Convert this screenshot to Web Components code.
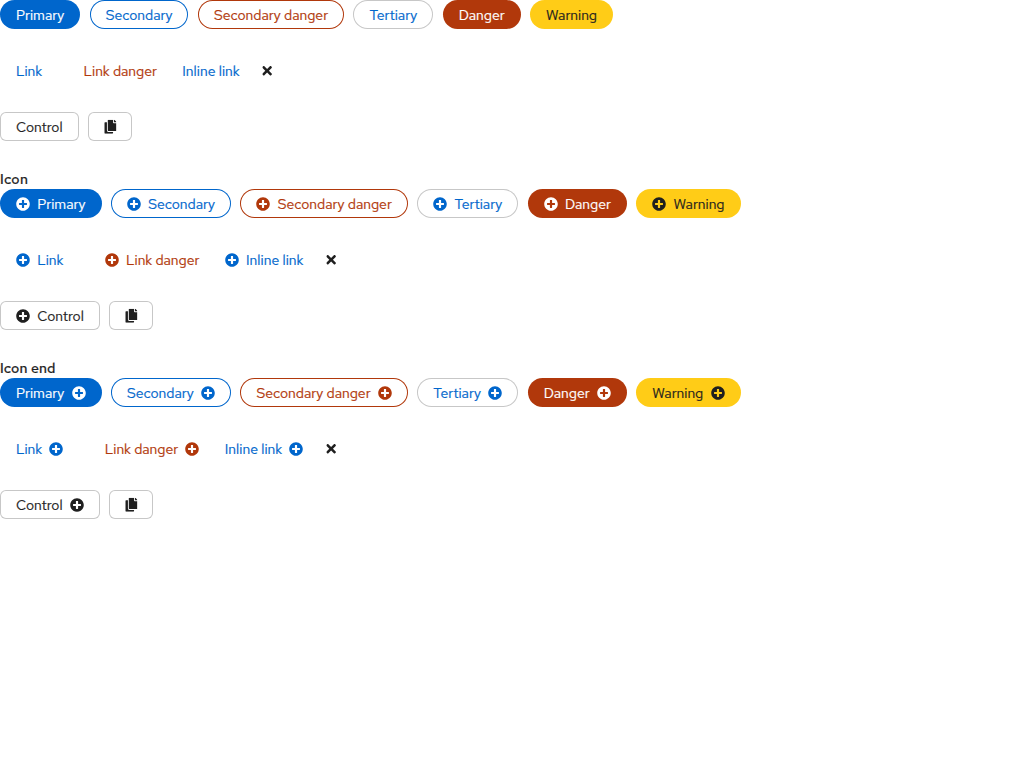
<!DOCTYPE html>
<html lang="en">
<head>
<meta charset="utf-8">
<title>Buttons</title>
<style>
body{margin:0;background:#fff;color:#1f1f1f;font:14px/21px "Red Hat Text","Noto Sans","Open Sans",sans-serif}
</style>
</head>
<body>
<button-demo></button-demo>
<script>
const ICONS = {
  plus: ['0 0 512 512', 14, 'M256 8C119 8 8 119 8 256s111 248 248 248 248-111 248-248S393 8 256 8zm144 276c0 6.6-5.4 12-12 12h-92v92c0 6.600-5.400 12-12 12h-56c-6.600 0-12-5.400-12-12v-92h-92c-6.600 0-12-5.400-12-12v-56c0-6.600 5.400-12 12-12h92v-92c0-6.600 5.400-12 12-12h56c6.600 0 12 5.400 12 12v92h92c6.600 0 12 5.400 12 12v56z'],
  times: ['0 0 352 512', 9.625, 'M242.720 256l100.070-100.070c12.280-12.280 12.280-32.190 0-44.480l-22.240-22.240c-12.280-12.280-32.190-12.280-44.480 0L176 189.280 75.930 89.210c-12.280-12.280-32.190-12.280-44.480 0L9.210 111.450c-12.280 12.280-12.280 32.190 0 44.480L109.280 256 9.210 356.070c-12.280 12.280-12.280 32.190 0 44.480l22.240 22.240c12.280 12.280 32.200 12.280 44.480 0L176 322.720l100.070 100.070c12.280 12.280 32.200 12.280 44.480 0l22.240-22.240c12.280-12.280 12.280-32.190 0-44.480L242.720 256z'],
  copy: ['0 0 448 512', 12.25, 'M320 448v40c0 13.255-10.745 24-24 24H24c-13.255 0-24-10.745-24-24V120c0-13.255 10.745-24 24-24h72v296c0 30.879 25.121 56 56 56h168zm0-344V0H152c-13.255 0-24 10.745-24 24v368c0 13.255 10.745 24 24 24h272c13.255 0 24-10.745 24-24V128H344c-13.200 0-24-10.800-24-24zm120.971-31.029L375.029 7.029A24 24 0 0 0 358.059 0H352v96h96v-6.059a24 24 0 0 0-7.029-16.970z']
};

class UiIcon extends HTMLElement {
  constructor() {
    super();
    this.attachShadow({mode: 'open'});
  }
  connectedCallback() {
    const [box, width, path] = ICONS[this.getAttribute('name')];
    this.shadowRoot.innerHTML = `<style>:host{display:block;flex:none}:host([name=times]),:host([name=copy]){transform:translate(.3px,-.3px)}svg{display:block;fill:currentColor}</style>
      <svg viewBox="${box}" width="${width}" height="14" aria-hidden="true"><path d="${path}"/></svg>`;
  }
}
customElements.define('ui-icon', UiIcon);

/* Text with a set advance width: the difference is spread between its letters. */
class UiLabel extends HTMLElement {
  constructor() {
    super();
    this.attachShadow({mode: 'open'}).innerHTML = `<style>
      :host{display:block;flex:none;white-space:nowrap;padding-top:1px;margin-bottom:-1px;-webkit-text-stroke:.2px currentColor}
      span{display:inline-block}
      </style><span><slot></slot></span>`;
  }
  connectedCallback() {
    const target = parseFloat(this.getAttribute('width'));
    const span = this.shadowRoot.querySelector('span');
    const natural = span.getBoundingClientRect().width;
    span.style.letterSpacing = (target - natural) / (this.textContent.length - 0.5) + 'px';
    this.style.width = target + 'px';
  }
}
customElements.define('ui-label', UiLabel);

class UiButton extends HTMLElement {
  constructor() {
    super();
    this.attachShadow({mode: 'open'}).innerHTML = `<style>
      :host{display:block;flex:none;--bg:transparent;--line:transparent;--fg:#06c;--radius:15px;--pad:16px}
      button{all:unset;box-sizing:border-box;display:flex;align-items:center;gap:7.25px;height:29px;padding:0 var(--pad);
        border-radius:var(--radius);background:var(--bg);color:var(--fg);box-shadow:inset 0 0 0 1px var(--line);cursor:pointer}
      :host([variant=primary]){--bg:#06c;--fg:#fff}
      :host([variant=secondary]){--line:#06c}
      :host([variant=secondary-danger]){--line:#b1380b;--fg:#b1380b}
      :host([variant=tertiary]){--line:#c7c7c7}
      :host([variant=danger]){--bg:#b1380b;--fg:#fff}
      :host([variant=warning]){--bg:#ffcc17;--fg:#1f1f1f}
      :host([variant=link-danger]){--fg:#b1380b}
      :host([variant=inline]){--pad:0px}
      :host([variant=plain]){--fg:#1f1f1f;--pad:13.200px}
      :host([variant=control]){--line:#c7c7c7;--fg:#1f1f1f;--radius:6px}
      </style><button type="button"><slot name="start"></slot><slot></slot><slot name="end"></slot></button>`;
  }
}
customElements.define('ui-button', UiButton);

class ButtonRow extends HTMLElement {
  constructor() {
    super();
    this.attachShadow({mode: 'open'}).innerHTML =
      `<style>:host{display:flex;gap:9.4px;height:29px}</style><slot></slot>`;
  }
}
customElements.define('button-row', ButtonRow);

class ButtonGroup extends HTMLElement {
  constructor() {
    super();
    this.attachShadow({mode: 'open'});
  }
  connectedCallback() {
    const side = this.getAttribute('icons');
    const icon = side ? `<ui-icon name="plus" slot="${side}"></ui-icon>` : '';
    const b = (variant, text, width) =>
      `<ui-button variant="${variant}">${icon}<ui-label width="${width}">${text}</ui-label></ui-button>`;
    this.shadowRoot.innerHTML = `<style>
      :host{display:block}
      .rows{display:grid;row-gap:27px}
      .title{height:21px;color:#1f1f1f;font-weight:500}
      </style>
      ${side ? '<div class="title"><slot></slot></div>' : ''}
      <div class="rows">
        <button-row>${b('primary', 'Primary', 48.3)}${b('secondary', 'Secondary', 66.8)}${b('secondary-danger', 'Secondary danger', 114.2)}${b('tertiary', 'Tertiary', 47.8)}${b('danger', 'Danger', 46)}${b('warning', 'Warning', 51)}</button-row>
        <button-row>${b('link', 'Link', 26.2)}${b('link-danger', 'Link danger', 73.3)}${b('inline', 'Inline link', 57.4)}<ui-button variant="plain"><ui-icon name="times"></ui-icon></ui-button></button-row>
        <button-row>${b('control', 'Control', 46.5)}<ui-button variant="control"><ui-icon name="copy"></ui-icon></ui-button></button-row>
      </div>`;
  }
}
customElements.define('button-group', ButtonGroup);

class ButtonDemo extends HTMLElement {
  constructor() {
    super();
    this.attachShadow({mode: 'open'}).innerHTML = `<style>:host{display:grid;row-gap:27px}</style>
      <button-group></button-group>
      <button-group icons="start"><ui-label width="28">Icon</ui-label></button-group>
      <button-group icons="end"><ui-label width="55.500">Icon end</ui-label></button-group>`;
  }
}
customElements.define('button-demo', ButtonDemo);
</script>
</body>
</html>
